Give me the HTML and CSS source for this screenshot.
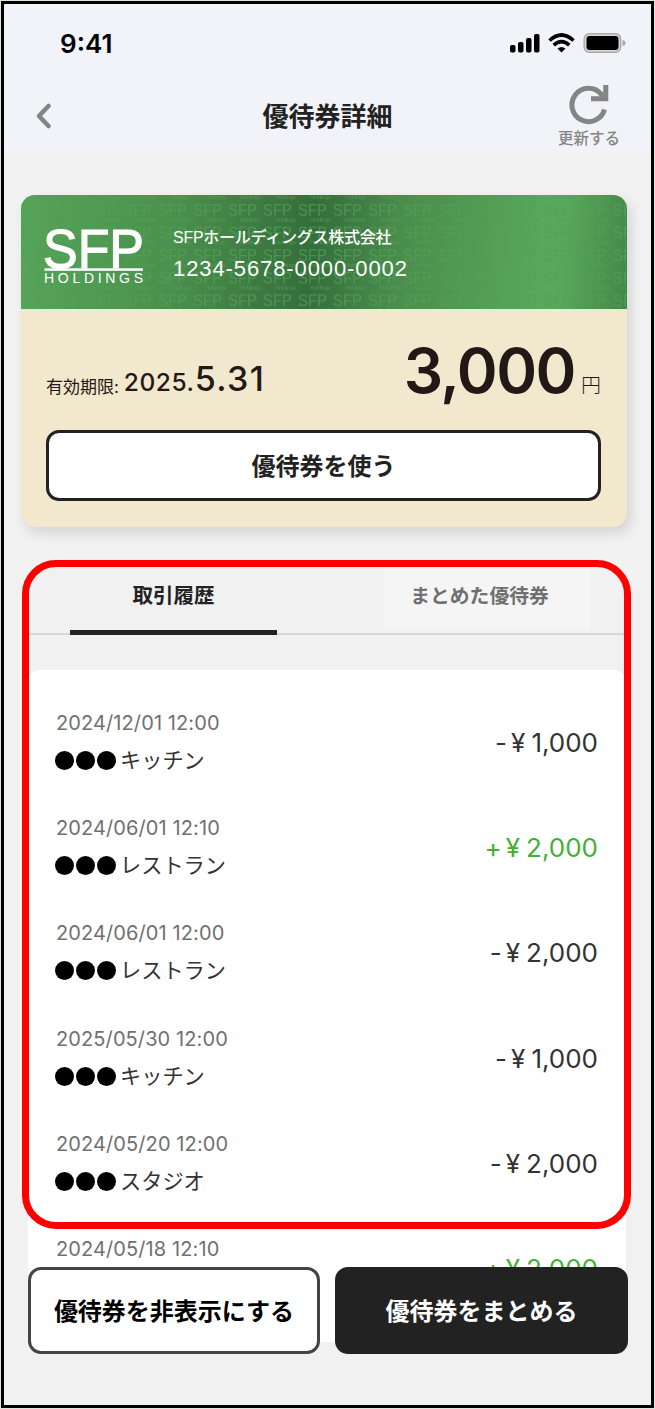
FILE: index.html
```html
<!DOCTYPE html>
<html lang="ja">
<head>
  <meta charset="UTF-8">
  <title>優待券詳細</title>
  <link rel="stylesheet" href="styles.css">
</head>
<body>
  <div class="phone">
    <header class="header">
      <div class="status-bar">
        <span class="time">9:41</span>
        <svg class="status-icons" width="118" height="22" viewBox="0 0 118 22">
          <rect x="1" y="13" width="5.5" height="7.5" rx="1.8"/>
          <rect x="9" y="10" width="5.5" height="10.5" rx="1.8"/>
          <rect x="17" y="6" width="5.5" height="14.5" rx="1.8"/>
          <rect x="25" y="2" width="5.5" height="18.5" rx="1.8"/>
          <g fill="none" stroke="#000" stroke-width="3.6">
            <path d="M40.5 8.5Q52.5 -2.5 64.5 8.5"/>
            <path d="M44.7 13.2Q52.5 6.2 60.3 13.2"/>
          </g>
          <path d="M48.5 16.6Q52.5 13.3 56.5 16.6L52.5 20.5Z"/>
          <rect x="75.2" y="1.7" width="36.5" height="18.6" rx="5" fill="#d8d8da" stroke="#a9aaac" stroke-width="1.4"/>
          <rect x="77.5" y="4" width="32" height="14" rx="3"/>
          <path d="M113.5 8Q116.5 8.5 116.5 11T113.5 14Z" fill="#a9aaac"/>
        </svg>
      </div>
      <div class="nav">
        <svg class="back" width="18" height="28" viewBox="0 0 18 28">
          <path d="M14.5 4L5 14L14.5 24" fill="none" stroke="#858585" stroke-width="4.6" stroke-linecap="round" stroke-linejoin="round"/>
        </svg>
        <h1>優待券詳細</h1>
        <div class="reload">
          <svg width="42" height="42" viewBox="0 0 42 42">
            <path d="M36.5 26.5A16.6 16.6 0 1 1 33 11L37 15.5M37.8 2V15.7H23" fill="none" stroke="#858585" stroke-width="5"/>
          </svg>
          <span>更新する</span>
        </div>
      </div>
    </header>

    <section class="card">
      <div class="card-head">
        <svg class="pattern" width="606" height="114">
          <defs>
            <pattern id="sfp" x="32" y="7" width="35" height="22.6" patternUnits="userSpaceOnUse">
              <text x="0" y="13.5" font-size="17" textLength="29" lengthAdjust="spacingAndGlyphs">SFP</text>
              <text x="12" y="20" font-size="6" textLength="21">Holdings</text>
            </pattern>
          </defs>
          <rect width="606" height="114" fill="url(#sfp)"/>
        </svg>
        <svg class="logo" width="100" height="66" viewBox="0 0 100 66" fill="#fff">
          <text class="logo-name" x="-1" y="44.5" font-size="56" textLength="101" lengthAdjust="spacingAndGlyphs">SFP</text>
          <rect x="0.5" y="45.3" width="98.5" height="2.5"/>
          <text x="0" y="59.5" font-size="14" textLength="99">HOLDINGS</text>
        </svg>
        <div class="company">
          <div class="company-name">SFPホールディングス株式会社</div>
          <div class="card-number">1234-5678-0000-0002</div>
        </div>
      </div>
      <div class="card-body">
        <div class="card-info">
          <div class="expiry">有効期限: <span class="year">2025.</span><span class="day">5.31</span></div>
          <div class="balance">3,000<span>円</span></div>
        </div>
        <button class="use-btn">優待券を使う</button>
      </div>
    </section>

    <section class="history">
      <div class="tabs">
        <div class="tab active">取引履歴</div>
        <div class="tab">まとめた優待券</div>
      </div>
      <ul class="list">
        <li>
          <div><div class="date">2024/12/01 12:00</div><div class="shop"><i></i><i></i><i></i>キッチン</div></div>
          <div class="amount"><b>-</b><b class="yen">¥</b>1,000</div>
        </li>
        <li>
          <div><div class="date">2024/06/01 12:10</div><div class="shop"><i></i><i></i><i></i>レストラン</div></div>
          <div class="amount plus"><b>+</b><b class="yen">¥</b>2,000</div>
        </li>
        <li>
          <div><div class="date">2024/06/01 12:00</div><div class="shop"><i></i><i></i><i></i>レストラン</div></div>
          <div class="amount"><b>-</b><b class="yen">¥</b>2,000</div>
        </li>
        <li>
          <div><div class="date">2025/05/30 12:00</div><div class="shop"><i></i><i></i><i></i>キッチン</div></div>
          <div class="amount"><b>-</b><b class="yen">¥</b>1,000</div>
        </li>
        <li>
          <div><div class="date">2024/05/20 12:00</div><div class="shop"><i></i><i></i><i></i>スタジオ</div></div>
          <div class="amount"><b>-</b><b class="yen">¥</b>2,000</div>
        </li>
        <li>
          <div><div class="date">2024/05/18 12:10</div><div class="shop"></div></div>
          <div class="amount plus"><b>+</b><b class="yen">¥</b>2,000</div>
        </li>
      </ul>
      <div class="highlight"></div>
    </section>

    <div class="actions">
      <button class="hide-btn">優待券を非表示にする</button>
      <button class="merge-btn">優待券をまとめる</button>
    </div>
  </div>
</body>
</html>
```
FILE: styles.css
```css
* {
  box-sizing: border-box;
}
body {
  margin: 0;
  padding: 1px;
  background: #dfe5dc;
  font-family: Inter, "Noto Sans CJK JP", sans-serif;
  color: #222;
}
.phone {
  position: relative;
  width: 653px;
  height: 1407px;
  border: 3px solid #000;
  background: #f1f1f1;
  overflow: hidden;
}
.header {
  height: 148px;
  background: #f1f3f8;
}
.status-bar {
  display: flex;
  justify-content: space-between;
  align-items: center;
  height: 78px;
  padding: 0 24px 0 56px;
}
.time {
  font-size: 26px;
  font-weight: 600;
  color: #000;
}
.nav {
  display: grid;
  grid-template-columns: 90px 1fr 90px;
  align-items: center;
  height: 70px;
}
.back {
  margin: -3px 0 0 30px;
}
.nav h1 {
  margin: -6px 0 0;
  font-size: 26px;
  font-weight: 700;
  text-align: center;
}
.reload {
  display: flex;
  flex-direction: column;
  align-items: center;
  margin-left: -10px;
  width: 76px;
  font-size: 15.5px;
  line-height: 26px;
  font-weight: 500;
  color: #858585;
}
.reload span {
  padding-top: 1px;
}
.card {
  width: 606px;
  height: 332px;
  margin: 43px 0 0 17px;
  border-radius: 14px;
  background: #f2e8cd;
  box-shadow: 4px 6px 12px rgba(0, 0, 0, 0.12);
  overflow: hidden;
}
.card-head {
  position: relative;
  display: flex;
  height: 114px;
  padding: 28px 0 0 23px;
  background: linear-gradient(95deg, #55a558 0%, #4b904e 25%, #356e3c 48%, #4a8d4d 62%, #57a85b 85%, #57a85b 89%, #45864a 100%);
  color: #fff;
}
.pattern {
  position: absolute;
  left: 0;
  top: 0;
  fill: #54a057;
  opacity: 0.75;
  font-family: "Liberation Sans", sans-serif;
}
.logo {
  position: relative;
  overflow: visible;
  font-family: "Liberation Sans", sans-serif;
}
.logo-name {
  stroke: #fff;
  stroke-width: 1.2px;
}
.company {
  position: relative;
  margin-left: 29px;
  padding-top: 1px;
  font-family: "Liberation Sans", "Noto Sans CJK JP", sans-serif;
}
.company-name {
  font-size: 16px;
  line-height: 27px;
  font-weight: 500;
  letter-spacing: -0.25px;
}
.card-number {
  font-size: 22px;
  line-height: 36px;
  letter-spacing: 0.9px;
}
.card-body {
  padding: 24px 26px 0 25px;
}
.card-info {
  display: flex;
  justify-content: space-between;
  align-items: baseline;
  height: 97px;
  color: #231815;
}
.expiry {
  font-size: 17px;
  white-space: nowrap;
}
.year {
  font-size: 24.5px;
  font-weight: 500;
  letter-spacing: 0.6px;
}
.day {
  font-size: 34px;
  font-weight: 500;
  letter-spacing: 1.4px;
}
.year,
.day {
  vertical-align: 2px;
}
.balance {
  font-size: 62px;
  font-weight: 600;
  letter-spacing: -1.5px;
  white-space: nowrap;
}
.balance span {
  margin-left: 6px;
  font-size: 20px;
  font-weight: 300;
  letter-spacing: 0;
}
button {
  padding: 0 0 2px;
  border: 3px solid #222;
  border-radius: 13px;
  background: #fff;
  font-family: inherit;
  font-size: 24px;
  font-weight: 700;
  color: #222;
}
.use-btn {
  display: block;
  width: 555px;
  height: 71px;
}
.history {
  position: relative;
  margin: 33px 20px 0 18px;
}
.tabs {
  display: flex;
  width: 596px;
  height: 75px;
  margin-left: 7px;
  padding: 5px 35px 0 41px;
  justify-content: space-between;
  border-bottom: 2px solid #d8d8d8;
}
.tab {
  width: 206px;
  height: 64px;
  padding-right: 15px;
  font-size: 19.8px;
  line-height: 62px;
  font-weight: 700;
  text-align: center;
  background: #f5f5f5;
  color: #707070;
}
.tab.active {
  width: 207px;
  height: 70px;
  padding: 0;
  font-size: 20.5px;
  background: none;
  border-bottom: 5px solid #222;
  color: #222;
}
.list {
  width: 598px;
  height: 672px;
  margin: 35px 0 0 6px;
  padding: 36px 28px 0 27px;
  border-radius: 12px 12px 0 0;
  background: #fff;
  list-style: none;
  overflow: hidden;
}
.list li {
  display: flex;
  justify-content: space-between;
  height: 105.2px;
}
.date {
  padding-left: 1px;
  font-size: 20px;
  line-height: 35px;
  letter-spacing: 0.1px;
  color: #707070;
}
.shop {
  display: flex;
  align-items: center;
  font-size: 21.2px;
  line-height: 39px;
  color: #333;
}
.shop i {
  width: 19px;
  height: 19px;
  margin-right: 2px;
  border-radius: 50%;
  background: #000;
}
.shop i:nth-child(3) {
  margin-right: 4px;
}
.amount {
  font-size: 26px;
  line-height: 73px;
  color: #333;
}
.amount b {
  margin-right: 4px;
  font-weight: 400;
}
.amount .yen {
  margin-right: 6px;
}
.amount.plus {
  color: #44b035;
}
.highlight {
  position: absolute;
  left: 0;
  top: 0;
  width: 609px;
  height: 669px;
  border: 7px solid #f00;
  border-radius: 34px;
}
.actions {
  position: absolute;
  left: 24px;
  top: 1263px;
  display: flex;
  gap: 15px;
}
.actions button {
  height: 87px;
}
.hide-btn {
  width: 292px;
  border-color: #444;
  color: #000;
}
.actions .merge-btn {
  width: 293px;
  border-color: #222;
  background: #222;
  color: #fff;
}
```
